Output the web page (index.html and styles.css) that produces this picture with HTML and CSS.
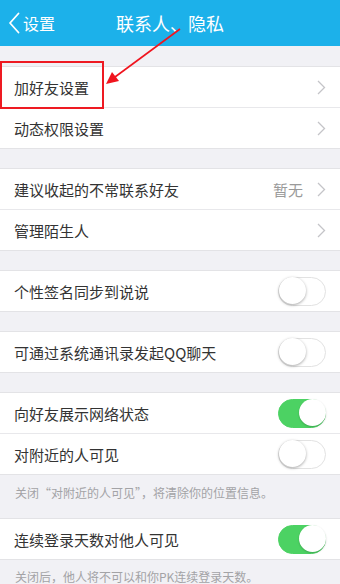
FILE: index.html
```html
<!DOCTYPE html>
<html lang="zh">
<head>
<meta charset="utf-8">
<title>联系人、隐私</title>
<link rel="stylesheet" href="styles.css">
</head>
<body>
<div class="page">
  <header class="nav">
    <div class="back">
      <svg class="back-icon" width="12" height="22" viewBox="0 0 12 22"><path d="M10.5 1.5 L2 11 L10.5 20.5" fill="none" stroke="#fff" stroke-width="1.8" stroke-linecap="round" stroke-linejoin="round"/></svg>
      <span>设置</span>
    </div>
    <div class="title">联系人、隐私</div>
  </header>

  <section class="group first">
    <div class="row"><span class="label">加好友设置</span><svg class="chev" width="9" height="15" viewBox="0 0 9 15"><polyline points="1,1 7.5,7.5 1,14" fill="none" stroke="#c4c4c8" stroke-width="1.3"/></svg></div>
    <div class="row"><span class="label">动态权限设置</span><svg class="chev" width="9" height="15" viewBox="0 0 9 15"><polyline points="1,1 7.5,7.5 1,14" fill="none" stroke="#c4c4c8" stroke-width="1.3"/></svg></div>
  </section>

  <section class="group">
    <div class="row"><span class="label">建议收起的不常联系好友</span><span class="value">暂无</span><svg class="chev" width="9" height="15" viewBox="0 0 9 15"><polyline points="1,1 7.5,7.5 1,14" fill="none" stroke="#c4c4c8" stroke-width="1.3"/></svg></div>
    <div class="row"><span class="label">管理陌生人</span><svg class="chev" width="9" height="15" viewBox="0 0 9 15"><polyline points="1,1 7.5,7.5 1,14" fill="none" stroke="#c4c4c8" stroke-width="1.3"/></svg></div>
  </section>

  <section class="group">
    <div class="row"><span class="label">个性签名同步到说说</span><span class="switch"></span></div>
  </section>

  <section class="group">
    <div class="row"><span class="label">可通过系统通讯录发起QQ聊天</span><span class="switch"></span></div>
  </section>

  <section class="group">
    <div class="row"><span class="label">向好友展示网络状态</span><span class="switch on"></span></div>
    <div class="row"><span class="label">对附近的人可见</span><span class="switch"></span></div>
  </section>
  <p class="note">关闭“对附近的人可见”，将清除你的位置信息。</p>

  <section class="group tight">
    <div class="row"><span class="label">连续登录天数对他人可见</span><span class="switch on"></span></div>
  </section>
  <p class="note last">关闭后，他人将不可以和你PK连续登录天数。</p>

  <div class="highlight"></div>
  <svg class="arrow" width="340" height="584" viewBox="0 0 340 584">
    <line x1="180" y1="29" x2="115" y2="77" stroke="#f0141e" stroke-width="1.6"/>
    <polygon points="106,84 112,72 119,81" fill="#f0141e"/>
  </svg>
</div>
</body>
</html>
```

FILE: styles.css
```css
* { box-sizing: border-box; }
html, body { margin: 0; padding: 0; }
body {
  background: #f1f1f5;
  font-family: "Noto Sans CJK SC", "Noto Sans", sans-serif;
  color: #2b2b2b;
}
.page {
  position: relative;
  width: 340px;
  height: 584px;
  overflow: hidden;
}
.nav {
  height: 46px;
  background: #1cb1ea;
  display: flex;
  align-items: center;
  position: relative;
  color: #fff;
}
.back {
  display: flex;
  align-items: center;
  gap: 3px;
  padding-left: 8px;
  font-size: 16px;
  line-height: 1;
}
.back-icon { display: block; }
.title {
  position: absolute;
  left: 0;
  right: 0;
  text-align: center;
  font-size: 18px;
  line-height: 46px;
  top: 0;
  pointer-events: none;
}
.group {
  margin-top: 19px;
  background: #fff;
  border-top: 1px solid #e3e3e6;
  border-bottom: 1px solid #e3e3e6;
}
.group.first { margin-top: 20px; }
.group.tight { margin-top: 0; }
.row {
  height: 41px;
  display: flex;
  align-items: center;
  padding: 0 14px;
  border-bottom: 1px solid #e8e8eb;
}
.row:last-child { border-bottom: none; height: 40px; }
.label {
  flex: 1;
  font-size: 15px;
  color: #333;
}
.value {
  font-size: 15px;
  color: #9a9a9a;
  margin-right: 14px;
}
.chev {
  display: block;
}
.switch {
  position: relative;
  width: 48px;
  height: 29px;
  border-radius: 15px;
  background: #fff;
  border: 1.5px solid #e2e2e2;
}
.switch::after {
  content: "";
  position: absolute;
  top: -0.5px;
  left: -0.5px;
  width: 27px;
  height: 27px;
  border-radius: 50%;
  background: #fff;
  box-shadow: 0 1px 3px rgba(0,0,0,0.35);
}
.switch.on {
  background: #4cd263;
  border-color: #4cd263;
}
.switch.on::after {
  left: auto;
  right: -0.5px;
  box-shadow: 0 1px 2px rgba(0,0,0,0.2);
}
.note {
  margin: 0;
  height: 43px;
  padding: 11px 15px 0;
  font-size: 12px;
  color: #a3a3a6;
  line-height: 14px;
}
.note.last {
  height: 25px;
  padding-top: 10px;
}
.highlight {
  position: absolute;
  left: 0;
  top: 61px;
  width: 104px;
  height: 48px;
  border: 2.5px solid #ee1a22;
}
.arrow {
  position: absolute;
  left: 0;
  top: 0;
  pointer-events: none;
}
```
